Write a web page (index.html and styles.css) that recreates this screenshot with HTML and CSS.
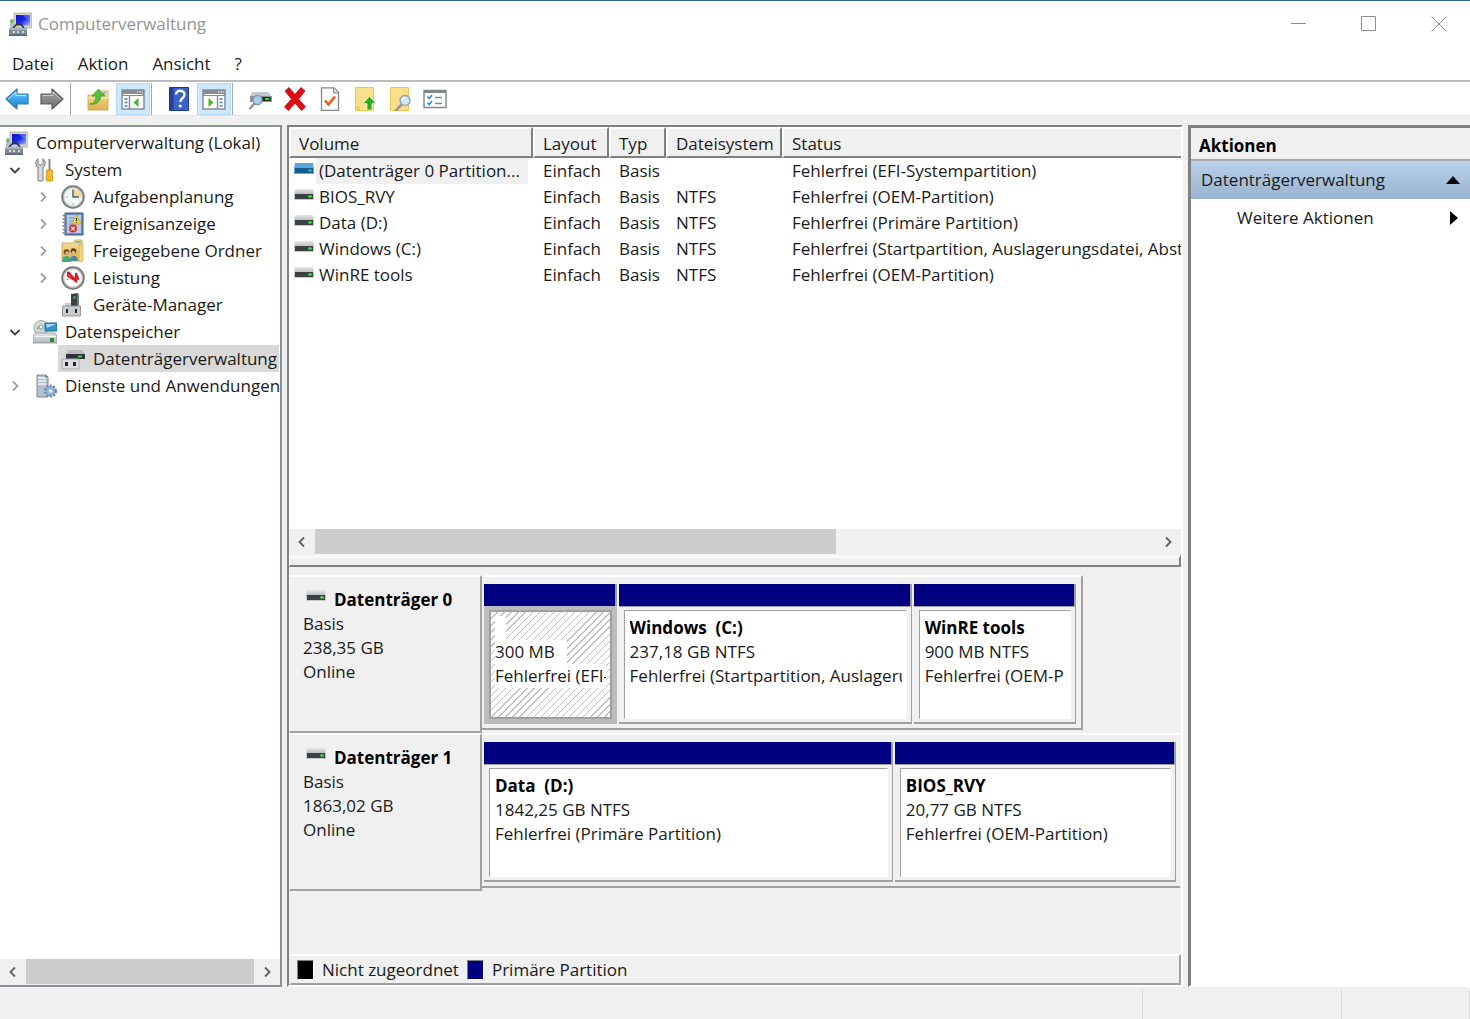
FILE: index.html
```html
<!DOCTYPE html>
<html lang="de">
  <head>
    <meta charset="UTF-8" />
    <title>Computerverwaltung</title>
    <link rel="stylesheet" href="styles.css">
  </head>
  <body>
    <svg class="sprite" aria-hidden="true">
      <defs>
        <linearGradient id="g-blue" x1="0" y1="0" x2="0" y2="1">
          <stop offset="0" stop-color="#8fd3f8" />
          <stop offset="0.5" stop-color="#3aa5e8" />
          <stop offset="1" stop-color="#1b7fc8" />
        </linearGradient>
        <linearGradient id="g-gray" x1="0" y1="0" x2="0" y2="1">
          <stop offset="0" stop-color="#a8a8a8" />
          <stop offset="1" stop-color="#6c6c6c" />
        </linearGradient>
        <linearGradient id="g-screen" x1="0" y1="0" x2="1" y2="1">
          <stop offset="0" stop-color="#0a14c8" />
          <stop offset="0.5" stop-color="#1a2ae0" />
          <stop offset="1" stop-color="#a8b8ff" />
        </linearGradient>
        <linearGradient id="g-folder" x1="0" y1="0" x2="0" y2="1">
          <stop offset="0" stop-color="#f9e29a" />
          <stop offset="1" stop-color="#deb04e" />
        </linearGradient>
        <linearGradient id="g-metal" x1="0" y1="0" x2="0" y2="1">
          <stop offset="0" stop-color="#e4e6e8" />
          <stop offset="1" stop-color="#b4b8bc" />
        </linearGradient>
      </defs>

      <symbol id="i-computer" viewBox="0 0 24 24">
        <path d="M6 1h18v15H6z" fill="#d4d4cc" stroke="#a8a8a0" stroke-width="0.8" />
        <path d="M8 3h14v10.500H8z" fill="url(#g-screen)" />
        <path d="M15 3l7 7V3z" fill="#6f86ff" opacity="0.6" />
        <path d="M2 7h4v9H2z" fill="#b9c0c4" />
        <path d="M3 8h2v3H3z" fill="#44c53c" />
        <path d="M5 16l4-4 4 .500 3 3.500" fill="none" stroke="#2d3438" stroke-width="1.600" />
        <path d="M1 16h18v8H1z" fill="#7d8c94" />
        <path d="M1 16h18v2H1z" fill="#a6b4bc" />
        <path d="M5 19h2v2H5zM9 19h2v2H9zM14 19h2v2h-2z" fill="#d5dde0" />
        <path d="M1 22.500h18V24H1z" fill="#56646a" />
      </symbol>

      <symbol id="i-back" viewBox="0 0 24 24">
        <path d="M1 12L12 2v5h11v10H12v5z" fill="url(#g-blue)" stroke="#2a78b4" stroke-width="1.200" stroke-linejoin="round" />
        <path d="M3 12l8-7v3.500h10.500" fill="none" stroke="#b9e4fb" stroke-width="1" />
      </symbol>
      <symbol id="i-forward" viewBox="0 0 24 24">
        <path d="M23 12L12 2v5H1v10h11v5z" fill="url(#g-gray)" stroke="#5a5a5a" stroke-width="1.200" stroke-linejoin="round" />
        <path d="M2.500 8.500H13V5l7.500 7" fill="none" stroke="#c8c8c8" stroke-width="1" />
      </symbol>
      <symbol id="i-folder-up" viewBox="0 0 24 24">
        <path d="M2 8h9l2-4h9v19H2z" fill="url(#g-folder)" stroke="#d0a040" stroke-width="0.800" />
        <path d="M14 6h7" stroke="#fff" stroke-width="1.500" />
        <path d="M17 6h3" stroke="#55a4dc" stroke-width="1.500" />
        <path d="M2 11h20" stroke="#fbeeb8" />
        <path d="M4 17c4 0 6-3 6-8H6l6.500-7L19 9h-4.500c0 6-4 9-10.500 8z" fill="#55c43c" stroke="#319a20" stroke-width="0.800" />
      </symbol>
      <symbol id="i-pane-left" viewBox="0 0 24 24">
        <path d="M1 3h22v19H1z" fill="#fff" stroke="#868c92" stroke-width="1.500" />
        <path d="M1 3h22v6H1z" fill="#868c92" />
        <path d="M2.500 7.500h19" stroke="#fff" />
        <path d="M16 5h1.500M18.500 5H20M20.800 5h1" stroke="#fff" stroke-width="1.200" />
        <path d="M8.500 9v13" stroke="#868c92" stroke-width="1.500" />
        <path d="M3.500 12h3M3.500 15.500h3M3.500 19h3" stroke="#5279a4" stroke-width="1.500" />
        <path d="M17.500 11v9l-5-4.500z" fill="#4cb32c" />
      </symbol>
      <symbol id="i-pane-right" viewBox="0 0 24 24">
        <path d="M1 3h22v19H1z" fill="#fff" stroke="#868c92" stroke-width="1.500" />
        <path d="M1 3h22v6H1z" fill="#868c92" />
        <path d="M2.500 7.500h19" stroke="#fff" />
        <path d="M16 5h1.500M18.500 5H20M20.800 5h1" stroke="#fff" stroke-width="1.200" />
        <path d="M15.500 9v13" stroke="#868c92" stroke-width="1.500" />
        <path d="M17.500 12h3M17.500 15.500h3M17.500 19h3" stroke="#5279a4" stroke-width="1.500" />
        <path d="M6.500 11v9l5-4.500z" fill="#4cb32c" />
      </symbol>
      <symbol id="i-help" viewBox="0 0 24 24">
        <path d="M2.500 0.500h19v23h-19z" fill="#3c62cc" stroke="#20388c" />
        <path d="M3 1h3.500v22H3z" fill="#243f9c" />
        <path d="M9 7.500c0-5 8.500-5 8.500 0 0 4-4.200 3.500-4.200 7.500" fill="none" stroke="#fff" stroke-width="2.300" />
        <circle cx="13.200" cy="19" r="1.600" fill="#fff" />
      </symbol>
      <symbol id="i-disk-search" viewBox="0 0 24 24">
        <path d="M4 5h17l2 4H2z" fill="#c4c8cc" />
        <path d="M2 9h22v6H2z" fill="#8c9298" />
        <path d="M13 10h9.500v4H13z" fill="#1d2a1d" />
        <path d="M17 12h4" stroke="#2fdc3a" stroke-width="2" />
        <circle cx="9.500" cy="13" r="4.500" fill="#a9cfe8" stroke="#7c9cb0" stroke-width="1.500" />
        <path d="M6.500 16.500L1.500 22" stroke="#8c98a2" stroke-width="2.500" />
      </symbol>
      <symbol id="i-delete" viewBox="0 0 24 24">
        <path d="M2 4l4-3.500 6 7 6-7L22 4l-6.500 8 7 8-4 3.500-6.500-7.500-6.500 7.500-4-3.500 7-8z" fill="#e00b12" stroke="#a80409" stroke-width="0.800" />
      </symbol>
      <symbol id="i-doc-check" viewBox="0 0 24 24">
        <path d="M3.500 0.800H16l4.500 4.500v18h-17z" fill="#fcfcfd" stroke="#84888c" stroke-width="1.300" />
        <path d="M15.500 1v5h5" fill="#dde0e4" stroke="#84888c" />
        <path d="M7 13.500l3.500 4L17 9.500" fill="none" stroke="#f05a1e" stroke-width="2.600" />
      </symbol>
      <symbol id="i-doc-up" viewBox="0 0 24 24">
        <path d="M2.500 0.500h18v23h-18z" fill="#fbe08c" stroke="#ecc850" />
        <path d="M3 19h4v4H3z" fill="#f4cf60" />
        <path d="M10 16.500l6.500-7 6.500 7h-4V23h-5v-6.500z" fill="#27ab22" stroke="#fff" stroke-width="0.600" />
      </symbol>
      <symbol id="i-doc-search" viewBox="0 0 24 24">
        <path d="M2.500 0.500h18v23h-18z" fill="#fbe08c" stroke="#ecc850" />
        <path d="M13.500 17.500L7.500 24" stroke="#9a9890" stroke-width="2.600" />
        <circle cx="17" cy="13.500" r="5" fill="#cfe8f8" stroke="#90a4b4" stroke-width="1.500" />
        <path d="M14 13.500c0-2 1.500-3 3-3" fill="none" stroke="#fff" stroke-width="1.200" />
      </symbol>
      <symbol id="i-list" viewBox="0 0 24 24">
        <path d="M1 3.500h22v17H1z" fill="#fff" stroke="#80868c" stroke-width="1.400" />
        <path d="M1 3.500h22v2.500H1z" fill="#80868c" />
        <path d="M4.500 9.500l1.700 2L9 8M4.500 15.500l1.700 2L9 14" fill="none" stroke="#2c86dc" stroke-width="1.500" />
        <path d="M12 10.500h7M12 16.500h7" stroke="#80868c" stroke-width="1.300" />
      </symbol>

      <symbol id="i-tools" viewBox="0 0 24 24">
        <path d="M5 1v5l2.500 1.500L10 6V1c3 2 3 6 0 8.500V22c0 1.500-5 1.500-5 0V9.500C2 7 2 3 5 1z" fill="#d8dadc" stroke="#8c8f92" stroke-width="1.200" />
        <path d="M16.500 1v11" stroke="#7c8084" stroke-width="1.800" fill="none" />
        <path d="M14 12h5l1 2-1 2 1 6c-1 1.500-6 1.500-7 0l1-6-1-2z" fill="#f5bc26" stroke="#c98c0c" stroke-width="0.900" />
      </symbol>
      <symbol id="i-clock" viewBox="0 0 24 24">
        <circle cx="12" cy="12" r="11" fill="#aeb0b0" stroke="#78797a" stroke-width="1.500" />
        <circle cx="12" cy="12" r="8.800" fill="#f3f8fb" stroke="#e4e4e4" />
        <path d="M12 12V3.500a8.500 8.500 0 0 1 8.500 8.500z" fill="#f4d896" />
        <path d="M12 4.500V12h6" fill="none" stroke="#4d5f6e" stroke-width="1.400" />
        <path d="M5 12h1.500M12 18v1.500" stroke="#7c8890" />
      </symbol>
      <symbol id="i-events" viewBox="0 0 24 24">
        <path d="M4 1h18v22H4z" fill="#6c8cc0" stroke="#3c5684" />
        <path d="M6 3h14v18H6z" fill="#b9cce8" />
        <path d="M8 6h5M8 9h5M8 12h3" stroke="#6f8cbc" />
        <path d="M1.500 3.500h4M1.500 7h4M1.500 10.500h4M1.500 14h4M1.500 17.500h4M1.500 21h4" stroke="#80868c" stroke-width="1.500" />
        <path d="M15.500 3l4.500 9h-9z" fill="#fbdc2c" stroke="#c8a008" stroke-width="0.800" />
        <path d="M15.500 6v3M15.500 10v1" stroke="#333" stroke-width="1.200" />
        <circle cx="12" cy="16.500" r="4" fill="#d8343c" />
        <path d="M10.300 14.800l3.400 3.400M13.700 14.800l-3.400 3.400" stroke="#fff" stroke-width="1.200" />
      </symbol>
      <symbol id="i-shared" viewBox="0 0 24 24">
        <path d="M1 4h11l2-3h7v21H1z" fill="url(#g-folder)" stroke="#d0a040" stroke-width="0.800" />
        <path d="M14 3h6" stroke="#5aa8dc" stroke-width="1.500" />
        <path d="M18 5h4v17h-4z" fill="#f3d684" stroke="#cfa347" stroke-width="0.600" />
        <circle cx="5.500" cy="13" r="2.800" fill="#6e4a2c" />
        <circle cx="6" cy="14" r="1.800" fill="#e8b48c" />
        <circle cx="12.500" cy="12" r="2.800" fill="#5c3c24" />
        <circle cx="12.500" cy="13.500" r="1.800" fill="#e8b48c" />
        <path d="M1 23c0-8 9-8 9 0z" fill="#3cae74" />
        <path d="M9 22c0-7 8-7 8 0z" fill="#4a86a4" />
      </symbol>
      <symbol id="i-gauge" viewBox="0 0 24 24">
        <circle cx="12" cy="12" r="11" fill="#b4b4b4" stroke="#747474" stroke-width="1.500" />
        <circle cx="12" cy="12" r="8.800" fill="#fff" stroke="#dedede" />
        <path d="M6 14a6.500 6.500 0 0 1 12 0" fill="none" stroke="#7a9c7a" stroke-width="1.500" stroke-dasharray="1.500 1.500" />
        <path d="M7 6v4l8 5V7l2.500 7" fill="none" stroke="#e01818" stroke-width="2" />
        <path d="M7 6l9 10" stroke="#e01818" stroke-width="2.200" />
      </symbol>
      <symbol id="i-device" viewBox="0 0 24 24">
        <path d="M10 1l7-1v15h-7z" fill="#3c4044" />
        <path d="M16 0l2 1v14h-2z" fill="#74787c" />
        <path d="M12.500 4.500h2" stroke="#36dc40" stroke-width="2" />
        <path d="M4 10h6v4H4z" fill="#c8ccd0" />
        <path d="M1.500 13h18v10h-18z" fill="#c9cbce" stroke="#94989c" />
        <path d="M5 16h2v4H5zM14 16h2v4h-2z" fill="#24282c" />
      </symbol>
      <symbol id="i-storage" viewBox="0 0 24 24">
        <ellipse cx="8" cy="8" rx="7" ry="7.500" fill="#d4d8da" stroke="#a4a8aa" />
        <ellipse cx="8" cy="7" rx="2" ry="2" fill="#fff" stroke="#8c9092" />
        <path d="M4 9l2-2" stroke="#6ccc5c" stroke-width="2" />
        <path d="M12 3h12v8H12z" fill="#2f94c8" stroke="#1c6c98" />
        <path d="M13 4h10l-9 4z" fill="#9cd8f4" />
        <path d="M3 13h19l2 3v7H0v-7z" fill="url(#g-metal)" stroke="#8c9094" stroke-width="0.800" />
        <path d="M1 16.500h22" stroke="#f4f4f4" />
        <path d="M17 18h4v4h-4z" fill="#2c8c2c" />
      </symbol>
      <symbol id="i-diskmgmt" viewBox="0 0 24 24">
        <path d="M7 3h14l3 4H5z" fill="#b8bcc0" />
        <path d="M5 7h19v5H5z" fill="#303438" />
        <path d="M17 9.500h4" stroke="#34e040" stroke-width="1.800" />
        <path d="M1 12h17v10H1z" fill="#dcdee0" stroke="#a8acb0" />
        <path d="M4 15h3v4H4zM12 15h3v4h-3z" fill="#202428" />
      </symbol>
      <symbol id="i-services" viewBox="0 0 24 24">
        <path d="M4 1h9l2 2v20H4z" fill="#b4c0cc" stroke="#7c8894" />
        <path d="M5 4h8M5 7h8M5 10h8" stroke="#f0f4f8" stroke-width="1.300" />
        <path d="M12 2.500h2" stroke="#38a838" stroke-width="1.500" />
        <circle cx="17.500" cy="17" r="5.500" fill="#a8c4de" stroke="#5c84ac" stroke-width="2" stroke-dasharray="2 1.500" />
        <circle cx="17.500" cy="17" r="4" fill="#9cbcdc" stroke="#6c94b8" stroke-width="0.800" />
        <circle cx="17.500" cy="17" r="1.500" fill="#fff" />
      </symbol>

      <symbol id="i-drive" viewBox="0 0 20 14">
        <path d="M1 1h18l1 6H0z" fill="url(#g-metal)" />
        <path d="M0 7h20v5H0z" fill="#c8cacd" />
        <path d="M1 6h18v5H1z" fill="#3e4144" />
        <path d="M14 8.500h4M16 7v3" stroke="#35e23c" stroke-width="1.300" />
      </symbol>
      <symbol id="i-drive-selected" viewBox="0 0 20 14">
        <path d="M1 1h18l1 6H0z" fill="#5ca4dc" />
        <path d="M0 7h20v5H0z" fill="#62a8de" />
        <path d="M1 6h18v5H1z" fill="#1a5c92" />
        <path d="M14 8.500h4M16 7v3" stroke="#1cb2a4" stroke-width="1.300" />
      </symbol>

      <symbol id="i-chevron" viewBox="0 0 12 12">
        <path d="M4 1.500L8.500 6 4 10.500" fill="none" stroke="currentColor" stroke-width="1.800" />
      </symbol>
      <symbol id="i-chevron-left" viewBox="0 0 12 12">
        <path d="M8 1.500L3.500 6 8 10.500" fill="none" stroke="currentColor" stroke-width="1.800" />
      </symbol>
      <symbol id="i-chevron-down" viewBox="0 0 12 12">
        <path d="M1.500 4L6 8.500 10.500 4" fill="none" stroke="currentColor" stroke-width="1.800" />
      </symbol>
    </svg>

    <header class="titlebar">
      <svg class="icon"><use href="#i-computer" /></svg>
      <h1>Computerverwaltung</h1>
      <div class="window-controls">
        <button aria-label="Minimieren"><svg viewBox="0 0 16 16"><path d="M0 7.500h15" /></svg></button>
        <button aria-label="Maximieren"><svg viewBox="0 0 16 16"><path d="M0.500 0.500h14v14h-14z" /></svg></button>
        <button aria-label="Schließen"><svg viewBox="0 0 16 16"><path d="M0.500 0.500l15 15M15.500 0.500l-15 15" /></svg></button>
      </div>
    </header>

    <nav class="menubar">
      <button>Datei</button>
      <button>Aktion</button>
      <button>Ansicht</button>
      <button>?</button>
    </nav>

    <div class="toolbar">
      <button aria-label="Zurück"><svg class="icon"><use href="#i-back" /></svg></button>
      <button aria-label="Vorwärts"><svg class="icon"><use href="#i-forward" /></svg></button>
      <span class="separator"></span>
      <button aria-label="Eine Ebene nach oben"><svg class="icon"><use href="#i-folder-up" /></svg></button>
      <button class="active" aria-label="Konsolenstruktur einblenden"><svg class="icon"><use href="#i-pane-left" /></svg></button>
      <span class="separator"></span>
      <button aria-label="Hilfe"><svg class="icon"><use href="#i-help" /></svg></button>
      <button class="active" aria-label="Aktionsbereich einblenden"><svg class="icon"><use href="#i-pane-right" /></svg></button>
      <span class="separator"></span>
      <button aria-label="Datenträger neu einlesen"><svg class="icon"><use href="#i-disk-search" /></svg></button>
      <button aria-label="Löschen"><svg class="icon"><use href="#i-delete" /></svg></button>
      <button aria-label="Eigenschaften"><svg class="icon"><use href="#i-doc-check" /></svg></button>
      <button aria-label="Öffnen"><svg class="icon"><use href="#i-doc-up" /></svg></button>
      <button aria-label="Durchsuchen"><svg class="icon"><use href="#i-doc-search" /></svg></button>
      <button aria-label="Einstellungen"><svg class="icon"><use href="#i-list" /></svg></button>
    </div>

    <main class="workspace">
      <aside class="tree-pane">
        <div class="tree">
          <div class="node root"><svg class="icon"><use href="#i-computer" /></svg>Computerverwaltung (Lokal)</div>
          <ul>
            <li>
              <div class="node">
                <button class="toggle open" aria-label="Reduzieren"><svg><use href="#i-chevron-down" /></svg></button>
                <span class="label"><svg class="icon"><use href="#i-tools" /></svg>System</span>
              </div>
              <ul>
                <li class="node">
                  <button class="toggle" aria-label="Erweitern"><svg><use href="#i-chevron" /></svg></button>
                  <span class="label"><svg class="icon"><use href="#i-clock" /></svg>Aufgabenplanung</span>
                </li>
                <li class="node">
                  <button class="toggle" aria-label="Erweitern"><svg><use href="#i-chevron" /></svg></button>
                  <span class="label"><svg class="icon"><use href="#i-events" /></svg>Ereignisanzeige</span>
                </li>
                <li class="node">
                  <button class="toggle" aria-label="Erweitern"><svg><use href="#i-chevron" /></svg></button>
                  <span class="label"><svg class="icon"><use href="#i-shared" /></svg>Freigegebene Ordner</span>
                </li>
                <li class="node">
                  <button class="toggle" aria-label="Erweitern"><svg><use href="#i-chevron" /></svg></button>
                  <span class="label"><svg class="icon"><use href="#i-gauge" /></svg>Leistung</span>
                </li>
                <li class="node">
                  <span class="toggle"></span>
                  <span class="label"><svg class="icon"><use href="#i-device" /></svg>Geräte-Manager</span>
                </li>
              </ul>
            </li>
            <li>
              <div class="node">
                <button class="toggle open" aria-label="Reduzieren"><svg><use href="#i-chevron-down" /></svg></button>
                <span class="label"><svg class="icon"><use href="#i-storage" /></svg>Datenspeicher</span>
              </div>
              <ul>
                <li class="node">
                  <span class="toggle"></span>
                  <span class="label selected"><svg class="icon"><use href="#i-diskmgmt" /></svg>Datenträgerverwaltung</span>
                </li>
              </ul>
            </li>
            <li class="node">
              <button class="toggle" aria-label="Erweitern"><svg><use href="#i-chevron" /></svg></button>
              <span class="label"><svg class="icon"><use href="#i-services" /></svg>Dienste und Anwendungen</span>
            </li>
          </ul>
        </div>
        <div class="scrollbar">
          <button aria-label="Nach links"><svg><use href="#i-chevron-left" /></svg></button>
          <div class="track"><div class="thumb" style="width: 100%"></div></div>
          <button aria-label="Nach rechts"><svg><use href="#i-chevron" /></svg></button>
        </div>
      </aside>

      <section class="content-pane">
        <div class="volume-list">
          <table>
            <colgroup>
              <col class="col-volume">
              <col class="col-layout">
              <col class="col-type">
              <col class="col-fs">
              <col>
            </colgroup>
            <thead>
              <tr>
                <th>Volume</th>
                <th>Layout</th>
                <th>Typ</th>
                <th>Dateisystem</th>
                <th>Status</th>
              </tr>
            </thead>
            <tbody>
              <tr class="selected">
                <td><div class="volume"><svg class="drive"><use href="#i-drive-selected" /></svg><span>(Datenträger 0 Partition...</span></div></td>
                <td>Einfach</td>
                <td>Basis</td>
                <td></td>
                <td>Fehlerfrei (EFI-Systempartition)</td>
              </tr>
              <tr>
                <td><div class="volume"><svg class="drive"><use href="#i-drive" /></svg><span>BIOS_RVY</span></div></td>
                <td>Einfach</td>
                <td>Basis</td>
                <td>NTFS</td>
                <td>Fehlerfrei (OEM-Partition)</td>
              </tr>
              <tr>
                <td><div class="volume"><svg class="drive"><use href="#i-drive" /></svg><span>Data (D:)</span></div></td>
                <td>Einfach</td>
                <td>Basis</td>
                <td>NTFS</td>
                <td>Fehlerfrei (Primäre Partition)</td>
              </tr>
              <tr>
                <td><div class="volume"><svg class="drive"><use href="#i-drive" /></svg><span>Windows (C:)</span></div></td>
                <td>Einfach</td>
                <td>Basis</td>
                <td>NTFS</td>
                <td>Fehlerfrei (Startpartition, Auslagerungsdatei, Abst</td>
              </tr>
              <tr>
                <td><div class="volume"><svg class="drive"><use href="#i-drive" /></svg><span>WinRE tools</span></div></td>
                <td>Einfach</td>
                <td>Basis</td>
                <td>NTFS</td>
                <td>Fehlerfrei (OEM-Partition)</td>
              </tr>
            </tbody>
          </table>
        </div>
        <div class="scrollbar">
          <button aria-label="Nach links"><svg><use href="#i-chevron-left" /></svg></button>
          <div class="track"><div class="thumb" style="width: 62%"></div></div>
          <button aria-label="Nach rechts"><svg><use href="#i-chevron" /></svg></button>
        </div>
        <div class="splitter"></div>

        <div class="disks">
          <article class="disk">
            <div class="disk-info">
              <h2><svg class="drive"><use href="#i-drive" /></svg>Datenträger 0</h2>
              <p>Basis</p>
              <p>238,35 GB</p>
              <p>Online</p>
            </div>
            <div class="disk-map">
              <div class="partitions" style="width: 86%">
                <div class="partition hatched" style="flex-grow: 133">
                  <div class="bar"></div>
                  <div class="frame">
                    <div class="box">
                      <p class="blank"></p>
                      <p><span>300 MB</span></p>
                      <p><span>Fehlerfrei (EFI-</span></p>
                    </div>
                  </div>
                </div>
                <div class="partition" style="flex-grow: 294">
                  <div class="bar"></div>
                  <div class="frame">
                    <div class="box">
                      <h3>Windows&nbsp; (C:)</h3>
                      <p>237,18 GB NTFS</p>
                      <p>Fehlerfrei (Startpartition, Auslageru</p>
                    </div>
                  </div>
                </div>
                <div class="partition" style="flex-grow: 163">
                  <div class="bar"></div>
                  <div class="frame">
                    <div class="box">
                      <h3>WinRE tools</h3>
                      <p>900 MB NTFS</p>
                      <p>Fehlerfrei (OEM-P</p>
                    </div>
                  </div>
                </div>
              </div>
            </div>
          </article>

          <article class="disk">
            <div class="disk-info">
              <h2><svg class="drive"><use href="#i-drive" /></svg>Datenträger 1</h2>
              <p>Basis</p>
              <p>1863,02 GB</p>
              <p>Online</p>
            </div>
            <div class="disk-map">
              <div class="partitions wide" style="width: 100%">
                <div class="partition" style="flex-grow: 410">
                  <div class="bar"></div>
                  <div class="frame">
                    <div class="box">
                      <h3>Data&nbsp; (D:)</h3>
                      <p>1842,25 GB NTFS</p>
                      <p>Fehlerfrei (Primäre Partition)</p>
                    </div>
                  </div>
                </div>
                <div class="partition" style="flex-grow: 282">
                  <div class="bar"></div>
                  <div class="frame">
                    <div class="box">
                      <h3>BIOS_RVY</h3>
                      <p>20,77 GB NTFS</p>
                      <p>Fehlerfrei (OEM-Partition)</p>
                    </div>
                  </div>
                </div>
              </div>
            </div>
          </article>
        </div>

        <div class="legend">
          <span class="swatch unallocated"></span>Nicht zugeordnet
          <span class="swatch primary"></span>Primäre Partition
        </div>
      </section>

      <aside class="actions-pane">
        <h2>Aktionen</h2>
        <button class="actions-group">Datenträgerverwaltung
          <svg viewBox="0 0 14 8"><path d="M0 8l7-8 7 8z" /></svg>
        </button>
        <button class="actions-item">Weitere Aktionen
          <svg viewBox="0 0 8 14"><path d="M0 0l8 7-8 7z" /></svg>
        </button>
      </aside>
    </main>

    <footer class="statusbar">
      <span></span>
      <span></span>
      <span></span>
    </footer>
  </body>
</html>
```

FILE: styles.css
```css
* {
  box-sizing: border-box;
}
body {
  margin: 0;
  height: 100vh;
  display: flex;
  flex-direction: column;
  overflow: hidden;
  background-color: #f0f0f0;
  border-top: 1px solid #2b5f8c;
  color: #1a1a1a;
  font-family: "Open Sans", "Noto Sans", sans-serif;
  font-size: 17px;
  line-height: 24px;
}
h1,
h2,
h3,
p,
ul {
  margin: 0;
  padding: 0;
}
ul {
  list-style: none;
}
button {
  border: 0;
  padding: 0;
  background: none;
  color: inherit;
  font: inherit;
}
.sprite {
  position: absolute;
  width: 0;
  height: 0;
}
.icon {
  width: 24px;
  height: 24px;
  flex: none;
}
.drive {
  width: 20px;
  height: 14px;
  flex: none;
}

/* title, menu and toolbar */
.titlebar {
  display: flex;
  align-items: center;
  height: 46px;
  padding: 0 23px 0 8px;
  background-color: #fff;
}
.titlebar h1 {
  margin-left: 6px;
  color: #949494;
  font-size: 17px;
  font-weight: 400;
}
.window-controls {
  display: flex;
  gap: 54px;
  margin-left: auto;
}
.window-controls button {
  width: 16px;
  height: 16px;
}
.window-controls svg {
  display: block;
  width: 16px;
  height: 16px;
  fill: none;
  stroke: #8c8c8c;
}
.menubar {
  display: flex;
  gap: 24px;
  height: 35px;
  padding: 0 12px;
  background-color: #fff;
  border-bottom: 2px solid #bcbcbc;
}
.toolbar {
  display: flex;
  gap: 1px;
  height: 34px;
  padding-top: 1px;
  background-color: #fff;
  border-bottom: 1px solid #e2e2e2;
}
.toolbar button {
  display: flex;
  align-items: center;
  justify-content: center;
  width: 34px;
}
.toolbar .active {
  background-color: #cce8ff;
  box-shadow: inset 0 0 0 1px #b4dcfa;
}
.separator {
  width: 10px;
  border-left: 1px solid #a8a8a8;
}

.workspace {
  display: flex;
  flex: 1;
  gap: 5px;
  min-height: 0;
  padding-top: 9px;
}

/* console tree */
.tree-pane {
  display: flex;
  flex: none;
  flex-direction: column;
  width: 282px;
  background-color: #fff;
  border: 2px solid #8b9099;
  border-left: 0;
}
.tree {
  flex: 1;
  overflow: hidden;
  padding: 2px 1px 0 0;
  white-space: nowrap;
}
.tree > ul {
  padding-left: 5px;
}
.tree ul ul {
  padding-left: 28px;
}
.node {
  display: flex;
  gap: 5px;
  height: 27px;
}
.root {
  align-items: center;
  gap: 8px;
  padding-left: 4px;
}
.toggle {
  display: flex;
  flex: none;
  align-items: center;
  justify-content: center;
  width: 20px;
  color: #a0a0a0;
}
.toggle.open {
  color: #404040;
}
.toggle svg,
.scrollbar svg {
  width: 12px;
  height: 12px;
}
.label {
  display: flex;
  flex: 1;
  align-items: center;
  gap: 8px;
  min-width: 0;
  padding-left: 3px;
}
.label.selected {
  background-color: #d9d9d9;
}

.scrollbar {
  display: flex;
  height: 26px;
  background-color: #f0f0f0;
  color: #606060;
}
.scrollbar button {
  display: flex;
  align-items: center;
  justify-content: center;
  width: 26px;
}
.track {
  flex: 1;
}
.thumb {
  height: 25px;
  background-color: #cdcdcd;
}

/* volume list */
.content-pane {
  display: flex;
  flex: 1;
  flex-direction: column;
  min-width: 0;
  border: 2px solid;
  border-color: #808080 #fff #fff #808080;
}
.volume-list {
  flex: 1;
  min-height: 0;
  overflow: hidden;
  background-color: #fff;
}
table {
  width: 100%;
  table-layout: fixed;
  border-collapse: separate;
  border-spacing: 0;
}
.col-volume {
  width: 244px;
}
.col-layout {
  width: 76px;
}
.col-type {
  width: 57px;
}
.col-fs {
  width: 116px;
}
th {
  height: 29px;
  padding: 3px 0 0 8px;
  background-color: #f0f0f0;
  border: 2px solid;
  border-color: #fff #808080 #808080 #fff;
  font-weight: 400;
  text-align: left;
}
th:last-child {
  border-right: 0;
}
td {
  height: 26px;
  padding: 0 0 0 10px;
  overflow: hidden;
  white-space: nowrap;
}
td:first-child {
  padding-left: 5px;
}
.volume {
  display: flex;
  gap: 2px;
}
.volume span {
  height: 26px;
  padding: 0 8px 0 3px;
  line-height: 26px;
}
.volume .drive {
  margin-top: 4px;
}
.selected .volume span {
  background-color: #f0f0f0;
}

.splitter {
  height: 12px;
  border: solid;
  border-width: 3px 2px 2px 1px;
  border-color: #f8f8f8 #808080 #808080 #fff;
}

/* graphical view */
.disks {
  height: 387px;
  padding-top: 8px;
}
.disk {
  display: flex;
  height: 158px;
}
.disk-info {
  flex: none;
  width: 193px;
  padding: 11px 0 0 13px;
  border: solid;
  border-width: 2px 2px 2px 1px;
  border-color: #fff #a0a0a0 #a0a0a0 #fff;
}
.disk-info h2 {
  display: flex;
  gap: 8px;
  padding-left: 3px;
  color: #000;
  font-size: 17px;
  line-height: 24px;
}
.disk-info .drive {
  margin-top: 1px;
}
.disk-map {
  flex: 1;
  min-width: 0;
}
.partitions {
  display: flex;
  gap: 2px;
  height: 155px;
  padding: 7px 5px 4px 2px;
  border: solid;
  border-width: 2px 2px 2px 0;
  border-color: #fff #a0a0a0 #a0a0a0;
}
.partitions.wide {
  padding-right: 3px;
  border-right-color: #f0f0f0;
}
.partition {
  display: flex;
  flex: 1 1 0;
  flex-direction: column;
  min-width: 0;
}
.bar {
  height: 22px;
  background-color: #000080;
  border-right: 2px solid #a0a0a0;
}
.frame {
  flex: 1;
  padding: 3px 4px 3px 5px;
  border: solid #a0a0a0;
  border-width: 1px 1px 2px 0;
}
.box {
  height: 100%;
  overflow: hidden;
  padding: 5px 4px 0 5px;
  background-color: #fff;
  border: 1px solid;
  border-color: #a0a0a0 #fff #fff #a0a0a0;
  white-space: nowrap;
}
.box h3 {
  color: #000;
  font-size: 17px;
  line-height: 24px;
}
.box p,
.box h3 {
  overflow: hidden;
}
.hatched .frame {
  background-color: #bcbcbc;
  border-color: #bcbcbc;
}
.hatched .box {
  background: repeating-linear-gradient(135deg, #fff 0, #fff 4px, #c0c0c0 4px, #c0c0c0 5px);
  border: 2px solid #a0a0a0;
  padding: 4px 4px 0;
}
.hatched span {
  display: inline-block;
  padding-right: 12px;
  background-color: #fff;
}
.hatched .blank {
  width: 11px;
  height: 24px;
  background-color: #fff;
}

.legend {
  display: flex;
  align-items: center;
  gap: 8px;
  height: 31px;
  padding-left: 6px;
  border: 2px solid;
  border-color: #fff #a0a0a0 #a0a0a0 #f0f0f0;
}
.swatch {
  width: 17px;
  height: 20px;
  border: 1px solid;
  border-color: #808080 #fff #fff #808080;
}
.unallocated {
  background-color: #000;
}
.primary {
  background-color: #000080;
}

/* actions */
.actions-pane {
  display: flex;
  flex: none;
  flex-direction: column;
  width: 282px;
  background-color: #fff;
  border: solid;
  border-width: 3px 0 2px 3px;
  border-color: #808080 #808080 #fff #808080;
}
.actions-pane h2 {
  height: 33px;
  padding: 6px 8px 0;
  background-color: #f0f0f0;
  border-bottom: 2px solid #a8a8a8;
  color: #000;
  font-size: 17px;
  line-height: 24px;
}
.actions-group,
.actions-item {
  display: flex;
  align-items: center;
  justify-content: space-between;
  height: 37px;
  padding: 0 10px;
  text-align: left;
}
.actions-group {
  height: 38px;
  background: linear-gradient(#b9d1ea, #99b4d1);
}
.actions-group svg {
  width: 14px;
  height: 8px;
}
.actions-item {
  padding: 0 12px 0 46px;
}
.actions-item svg {
  width: 8px;
  height: 14px;
}

.statusbar {
  display: flex;
  justify-content: flex-end;
  height: 32px;
  padding-top: 3px;
}
.statusbar span {
  width: 199px;
  border-right: 1px solid #dadada;
}
.statusbar span:last-child {
  width: 128px;
}
```
